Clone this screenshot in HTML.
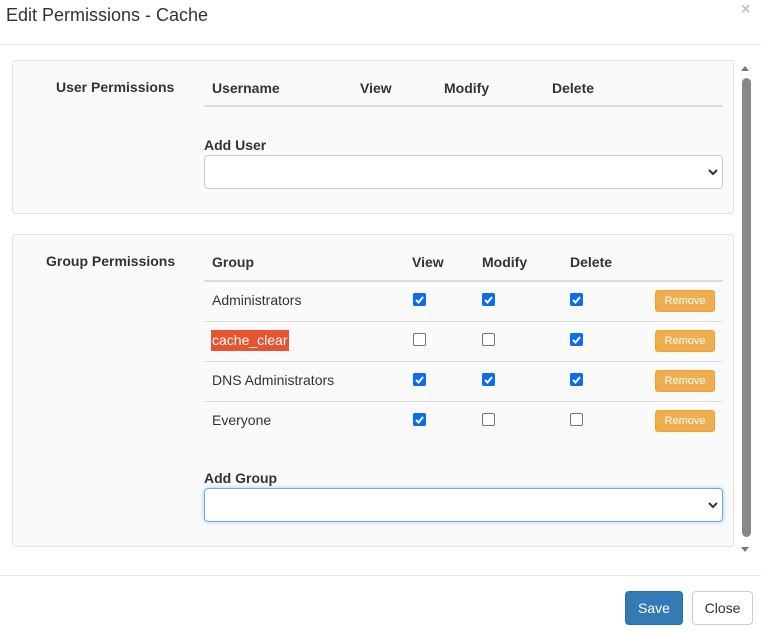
<!DOCTYPE html>
<html><head><style>
body{margin:0;width:761px;height:632px;background:#fff;font-family:"Liberation Sans",sans-serif;color:#333;position:relative;overflow:hidden;font-size:14px}
.a{position:absolute}
.panel{position:absolute;left:12px;width:720px;background:#fafafa;border:1px solid #e3e3e3;border-radius:3px}
.b{font-weight:bold}
.sel{position:absolute;left:204px;width:517px;height:32px;background:#fff;border:1px solid #ccc;border-radius:4px}
.sel svg{position:absolute;right:4px;top:12px}
.line{position:absolute;left:204px;width:519px;height:1px;background:#ddd}
.cb{position:absolute;width:13px;height:13px;border-radius:2px;box-sizing:border-box}
.cb svg{position:absolute;left:0;top:0}
.on{background:#0b6cf2}
.off{border:1px solid #767676;background:#fff}
.rm{position:absolute;left:655px;width:60px;height:22px;background:#f0ad4e;border:1px solid #eea236;border-radius:3px;box-sizing:border-box;color:#fff;font-size:11px;text-align:center;line-height:20px}
</style></head><body>
<div class="a" style="left:6px;top:5px;font-size:18px">Edit Permissions - Cache</div>
<div class="a" style="left:741px;top:1px;font-size:16px;color:#c0c0c0;font-weight:bold">×</div>
<div class="a" style="left:0;top:44px;width:761px;height:1px;background:#e5e5e5"></div>

<div class="panel" style="top:60px;height:152px"></div>
<div class="a b" style="left:56px;top:79px">User Permissions</div>
<div class="a b" style="left:212px;top:80px">Username</div>
<div class="a b" style="left:360px;top:80px">View</div>
<div class="a b" style="left:444px;top:80px">Modify</div>
<div class="a b" style="left:552px;top:80px">Delete</div>
<div class="line" style="top:105px;height:2px"></div>
<div class="a b" style="left:204px;top:137px">Add User</div>
<div class="sel" style="top:155px"><svg width="10" height="8"><path d="M1 2l4 4 4-4" stroke="#333" stroke-width="2" fill="none"/></svg></div>

<div class="panel" style="top:234px;height:311px"></div>
<div class="a b" style="left:46px;top:253px">Group Permissions</div>
<div class="a b" style="left:212px;top:254px">Group</div>
<div class="a b" style="left:412px;top:254px">View</div>
<div class="a b" style="left:482px;top:254px">Modify</div>
<div class="a b" style="left:570px;top:254px">Delete</div>
<div class="line" style="top:280px;height:2px"></div>

<div class="a" style="left:212px;top:292px">Administrators</div>
<div class="cb on" style="left:413px;top:293px"><svg width="13" height="13"><path d="M3 7l2.5 2.5L10 4" stroke="#fff" stroke-width="2" fill="none"/></svg></div><div class="cb on" style="left:482px;top:293px"><svg width="13" height="13"><path d="M3 7l2.5 2.5L10 4" stroke="#fff" stroke-width="2" fill="none"/></svg></div><div class="cb on" style="left:570px;top:293px"><svg width="13" height="13"><path d="M3 7l2.5 2.5L10 4" stroke="#fff" stroke-width="2" fill="none"/></svg></div>
<div class="rm" style="top:290px">Remove</div>
<div class="line" style="top:321px"></div>

<div class="a" style="left:211px;top:330px;background:#e5532f;color:#fff;padding:1px 1px;height:19px;line-height:19px">cache_clear</div>
<div class="cb off" style="left:413px;top:333px"></div><div class="cb off" style="left:482px;top:333px"></div><div class="cb on" style="left:570px;top:333px"><svg width="13" height="13"><path d="M3 7l2.5 2.5L10 4" stroke="#fff" stroke-width="2" fill="none"/></svg></div>
<div class="rm" style="top:330px">Remove</div>
<div class="line" style="top:361px"></div>

<div class="a" style="left:212px;top:372px">DNS Administrators</div>
<div class="cb on" style="left:413px;top:373px"><svg width="13" height="13"><path d="M3 7l2.5 2.5L10 4" stroke="#fff" stroke-width="2" fill="none"/></svg></div><div class="cb on" style="left:482px;top:373px"><svg width="13" height="13"><path d="M3 7l2.5 2.5L10 4" stroke="#fff" stroke-width="2" fill="none"/></svg></div><div class="cb on" style="left:570px;top:373px"><svg width="13" height="13"><path d="M3 7l2.5 2.5L10 4" stroke="#fff" stroke-width="2" fill="none"/></svg></div>
<div class="rm" style="top:370px">Remove</div>
<div class="line" style="top:401px"></div>

<div class="a" style="left:212px;top:412px">Everyone</div>
<div class="cb on" style="left:413px;top:413px"><svg width="13" height="13"><path d="M3 7l2.5 2.5L10 4" stroke="#fff" stroke-width="2" fill="none"/></svg></div><div class="cb off" style="left:482px;top:413px"></div><div class="cb off" style="left:570px;top:413px"></div>
<div class="rm" style="top:410px">Remove</div>

<div class="a b" style="left:204px;top:470px">Add Group</div>
<div class="sel" style="top:488px;border-color:#66afe9;box-shadow:0 0 4px rgba(102,175,233,.6)"><svg width="10" height="8"><path d="M1 2l4 4 4-4" stroke="#333" stroke-width="2" fill="none"/></svg></div>

<div class="a" style="left:741px;top:66px;width:0;height:0;border:4px solid transparent;border-bottom:5px solid #777;border-top:0"></div>
<div class="a" style="left:742px;top:78px;width:9px;height:459px;background:#888;border-radius:5px"></div>
<div class="a" style="left:741px;top:547px;width:0;height:0;border:4px solid transparent;border-top:5px solid #777;border-bottom:0"></div>

<div class="a" style="left:0;top:575px;width:761px;height:1px;background:#e5e5e5"></div>
<div class="a" style="left:625px;top:591px;width:58px;height:34px;background:#337ab7;border:1px solid #2e6da4;border-radius:4px;box-sizing:border-box;color:#fff;text-align:center;line-height:32px">Save</div>
<div class="a" style="left:692px;top:591px;width:61px;height:34px;background:#fff;border:1px solid #ccc;border-radius:4px;box-sizing:border-box;text-align:center;line-height:32px">Close</div>
</body></html>
